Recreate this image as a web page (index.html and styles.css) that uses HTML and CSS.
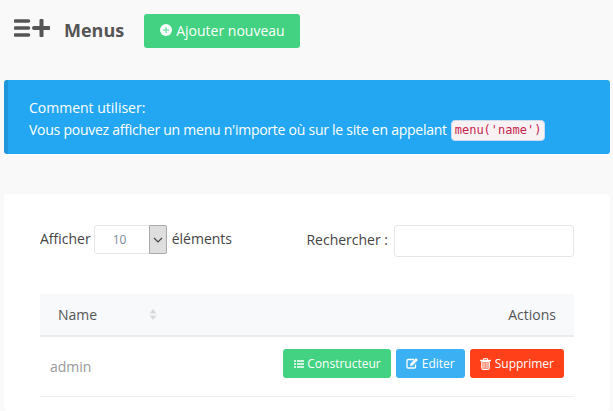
FILE: index.html
```html
<!DOCTYPE html>
<html lang="fr">
<head>
    <meta charset="UTF-8">
    <meta name="viewport" content="width=device-width, initial-scale=1.0">
    <title>Menus</title>
    <link rel="stylesheet" href="styles.css">
</head>
<body>
    <div class="page-header">
        <svg class="page-icon" width="36" height="18" viewBox="0 0 36 18">
            <path d="M1.500 2h13M1.500 9h13M1.500 16h13" stroke="#555" stroke-width="3.600" stroke-linecap="round" fill="none"/>
            <path d="M27.500 1.500v15M20 9h15" stroke="#555" stroke-width="4" stroke-linecap="round" fill="none"/>
        </svg>
        <h1>Menus</h1>
        <button class="btn btn-add">
            <svg class="btn-icon" width="12" height="12" viewBox="0 0 12 12">
                <circle cx="6" cy="6" r="6" fill="#fff"/>
                <path d="M3 6h6M6 3v6" stroke="#84e0ad" stroke-width="1.600"/>
            </svg>
            Ajouter nouveau
        </button>
    </div>

    <div class="alert">
        <div>Comment utiliser:</div>
        <div class="alert-line">Vous pouvez afficher un menu n'importe où sur le site en appelant <code>menu('name')</code></div>
    </div>

    <div class="card">
        <div class="table-tools">
            <label class="length-label">
                <span class="tool-text">Afficher</span>
                <span class="select">
                    <span class="select-value">10</span>
                    <span class="select-arrow">
                        <svg width="10" height="6" viewBox="0 0 10 6"><path d="M1 1l4 4 4-4" stroke="#444" stroke-width="1.200" fill="none"/></svg>
                    </span>
                </span>
                <span class="tool-text">éléments</span>
            </label>
            <label class="search-label">
                <span class="search-text">Rechercher :</span>
                <input type="text" class="search-input">
            </label>
        </div>

        <table>
            <thead>
                <tr>
                    <th class="col-name">
                        <span class="th-inner">
                            Name
                            <svg class="sort-icon" width="8" height="11" viewBox="0 0 8 11">
                                <path d="M4 0l3.500 4.500h-7zM4 11l3.500-4.500h-7z" fill="#d9d9d9"/>
                            </svg>
                        </span>
                    </th>
                    <th class="col-actions">Actions</th>
                </tr>
            </thead>
            <tbody>
                <tr>
                    <td class="cell-name">admin</td>
                    <td class="cell-actions">
                        <div class="action-buttons">
                            <button class="btn btn-sm btn-builder">
                                <svg width="10" height="8" viewBox="0 0 10 8"><path d="M0 1h2M3 1h7M0 4h2M3 4h7M0 7h2M3 7h7" stroke="#fff" stroke-width="1.500"/></svg>
                                Constructeur
                            </button>
                            <button class="btn btn-sm btn-edit">
                                <svg width="12" height="11" viewBox="0 0 12 11"><path d="M8 1.500H2a1 1 0 0 0-1 1V9a1 1 0 0 0 1 1h6.500a1 1 0 0 0 1-1V6.500" stroke="#fff" stroke-width="1.300" fill="none"/><path d="M4 8l.5-2.500L10 0l2 2-5.500 5.500z" fill="#fff"/></svg>
                                Editer
                            </button>
                            <button class="btn btn-sm btn-delete">
                                <svg width="11" height="12" viewBox="0 0 11 12"><path d="M0 2.500h11" stroke="#fff" stroke-width="1.400" fill="none"/><path d="M3.500 2V.7h4V2" stroke="#fff" stroke-width="1" fill="none"/><path d="M1.700 3.500h7.600V10.500a1 1 0 0 1-1 1h-5.600a1 1 0 0 1-1-1z" fill="#fff" fill-opacity="0.450" stroke="#fff" stroke-width="1"/><path d="M4 5v5M7 5v5" stroke="#fff" stroke-opacity="0.700" stroke-width="0.800"/></svg>
                                Supprimer
                            </button>
                        </div>
                    </td>
                </tr>
            </tbody>
        </table>
    </div>
</body>
</html>
```
FILE: styles.css
```css
body {
  margin: 0;
  height: 411px;
  overflow: hidden;
  background-color: #f9f9f9;
  font-family: "Open Sans", sans-serif;
  font-size: 14px;
  color: #555;
}

.page-header {
  display: flex;
  align-items: center;
  height: 34px;
  padding: 14px 0 0 14px;
}

.page-icon {
  align-self: flex-start;
  margin: 5px 14px 0 0;
}

h1 {
  margin: 0 20px 2px 0;
  font-size: 18px;
  font-weight: 700;
  color: #555;
}

.btn {
  display: inline-flex;
  align-items: center;
  border: none;
  border-radius: 3px;
  color: #fff;
  font-family: "Open Sans", sans-serif;
}

.btn-add {
  width: 156px;
  height: 34px;
  padding: 0 0 2px 16px;
  gap: 4px;
  background-color: #42d281;
  font-size: 14px;
}

.alert {
  margin: 32px 3px 0 4px;
  height: 74px;
  box-sizing: border-box;
  padding: 17px 21px 0;
  background-color: #23a7f2;
  border-left: 4px solid #1f96da;
  border-radius: 3px;
  color: #fff;
  font-size: 14px;
  line-height: 22px;
}

.alert-line {
  height: 22px;
  letter-spacing: -0.25px;
}

code {
  display: inline-block;
  margin-left: 1px;
  padding: 0 2.500px;
  line-height: 19px;
  vertical-align: 1px;
  background-color: #f9f2f4;
  border: 1px solid #ccdcee;
  border-radius: 4px;
  color: #c7254e;
  font-family: "DejaVu Sans Mono", monospace;
  font-size: 12px;
  letter-spacing: 0;
}

.card {
  margin: 40px 3px 0 4px;
  padding: 31px 36px 0;
  height: 186px;
  background-color: #fff;
  border-radius: 4px;
}

.table-tools {
  display: flex;
  justify-content: space-between;
  align-items: flex-start;
  height: 32px;
  font-size: 14px;
  color: #444;
}

.length-label {
  display: flex;
  align-items: center;
}

.tool-text {
  padding-bottom: 2px;
}

.select {
  display: flex;
  width: 73px;
  height: 29px;
  box-sizing: border-box;
  margin: 0 5px 0 3px;
  border: 1px solid #e6e6e6;
  border-radius: 3px;
}

.select-value {
  flex: 1;
  padding: 5px 0 0 18px;
  font-size: 12px;
  color: #7a8aa0;
}

.select-arrow {
  display: flex;
  align-items: center;
  justify-content: center;
  width: 16px;
  margin: -1px -1px -1px 0;
  background-color: #dedede;
  border: 1px solid #aaa;
  border-radius: 0 2px 2px 0;
}

.search-label {
  display: flex;
  align-items: center;
  gap: 6px;
}

.search-text {
  padding-bottom: 4px;
}

.search-input {
  width: 180px;
  height: 32px;
  box-sizing: border-box;
  border: 1px solid #e6e6e6;
  border-radius: 3px;
  background-color: #fff;
}

table {
  width: 100%;
  margin-top: 37px;
  border-collapse: collapse;
}

thead tr {
  height: 42px;
  background-color: #f7f9fb;
  border-bottom: 2px solid #e9ecef;
}

th {
  font-weight: 400;
  font-size: 14px;
  color: #555;
  padding: 0 18px;
}

.col-name {
  text-align: left;
}

.th-inner {
  display: flex;
  align-items: center;
  justify-content: space-between;
  width: 99px;
}

.col-actions {
  text-align: right;
}

tbody tr {
  height: 60px;
  border-bottom: 1px solid #eeeeee;
}

.cell-name {
  padding: 0 10px;
  font-size: 14px;
  color: #999;
}

.cell-actions {
  padding: 0 10px 5px 0;
}

.action-buttons {
  display: flex;
  justify-content: flex-end;
  gap: 5px;
}

.btn-sm {
  height: 29px;
  padding: 0 10px;
  gap: 4px;
  font-size: 12px;
}

.btn-builder {
  padding: 0 10px 0 11px;
  gap: 3px;
  background-color: #42d281;
}

.btn-edit {
  background-color: #3bb0f3;
}

.btn-delete {
  background-color: #ff4019;
}

.sort-icon {
  flex: none;
}
```
